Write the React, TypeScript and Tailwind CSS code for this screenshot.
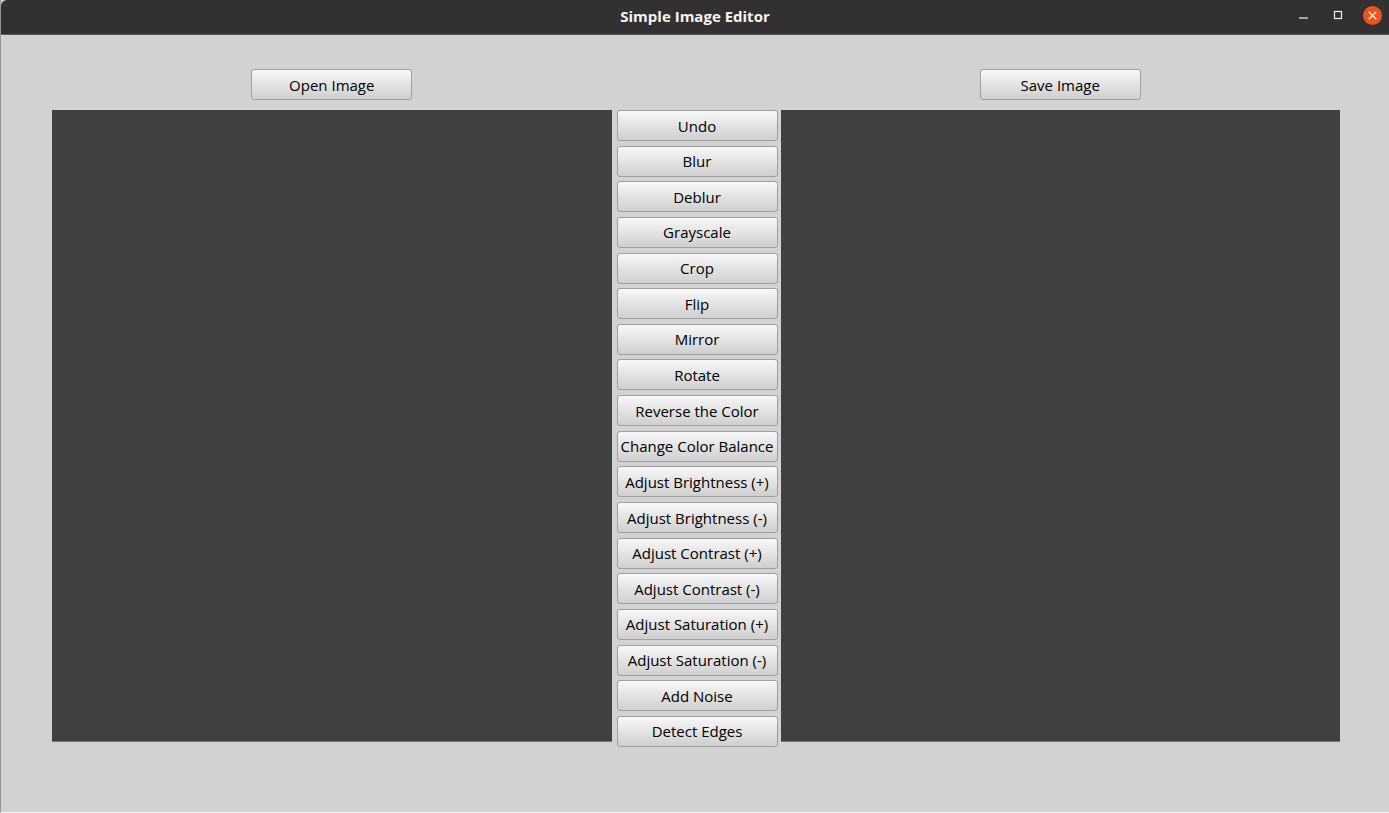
import type { ReactNode } from "react";

const FILTERS = [
  "Undo",
  "Blur",
  "Deblur",
  "Grayscale",
  "Crop",
  "Flip",
  "Mirror",
  "Rotate",
  "Reverse the Color",
  "Change Color Balance",
  "Adjust Brightness (+)",
  "Adjust Brightness (-)",
  "Adjust Contrast (+)",
  "Adjust Contrast (-)",
  "Adjust Saturation (+)",
  "Adjust Saturation (-)",
  "Add Noise",
  "Detect Edges",
];

function PushButton({ children }: { children: ReactNode }) {
  return (
    <button
      type="button"
      className="flex h-[31px] w-[161px] shrink-0 items-center justify-center rounded-[3px] border border-[#a0a0a0] bg-linear-to-b from-[#f8f8f8] to-[#cfcfcf] text-[15px] leading-5 whitespace-nowrap text-black active:from-[#cfcfcf] active:to-[#dcdcdc]"
    >
      {children}
    </button>
  );
}

function TitleBar() {
  return (
    <header className="grid h-[35px] shrink-0 grid-cols-[1fr_auto_1fr] items-center rounded-tl-md border-b border-[#575555] bg-[#333031] pb-[3px]">
      <h1 className="col-start-2 text-[15px] leading-5 font-bold text-[#f4f4f4]">Simple Image Editor</h1>
      <div className="flex items-center justify-end gap-[15px] pr-1.5">
        <button type="button" aria-label="Minimize" className="size-5">
          <svg viewBox="0 0 20 20" className="size-5" fill="none" stroke="#d8d8d8">
            <path d="M6 12h9" strokeWidth="1.4" />
          </svg>
        </button>
        <button type="button" aria-label="Maximize" className="size-5">
          <svg viewBox="0 0 20 20" className="size-5" fill="none" stroke="#f0f0f0">
            <rect x="6.5" y="5.5" width="7" height="7" strokeWidth="1.2" />
          </svg>
        </button>
        <button type="button" aria-label="Close" className="size-5">
          <svg viewBox="0 0 20 20" className="size-5" fill="none">
            <circle cx="9.5" cy="9.5" r="9.5" fill="#e95420" />
            <path d="M5.8 5.8l7.4 7.4M13.2 5.8l-7.4 7.4" stroke="#fbe6de" strokeWidth="1.4" />
          </svg>
        </button>
      </div>
    </header>
  );
}

export default function App() {
  return (
    <div className="flex min-h-screen flex-col border-b border-l border-b-[#f2f2f2] border-l-[#959595] bg-[#d2d2d2] font-['Open_Sans','Noto_Sans',sans-serif]">
      <TitleBar />
      <main className="grid flex-1 grid-cols-[1fr_auto_1fr] grid-rows-[auto_1fr] gap-y-2.5 pt-[34px] pr-[49px] pb-[65px] pl-[51px]">
        <div className="flex justify-center">
          <PushButton>Open Image</PushButton>
        </div>
        <div className="col-start-3 flex justify-center">
          <PushButton>Save Image</PushButton>
        </div>
        <section aria-label="Original image" className="mb-[5px] border-b border-[#777777] bg-[#404040]" />
        <nav aria-label="Filters" className="flex flex-col justify-between gap-1 pr-[3px] pl-[5px]">
          {FILTERS.map((name) => (
            <PushButton key={name}>{name}</PushButton>
          ))}
        </nav>
        <section aria-label="Edited image" className="mb-[5px] border-b border-[#777777] bg-[#404040]" />
      </main>
    </div>
  );
}
